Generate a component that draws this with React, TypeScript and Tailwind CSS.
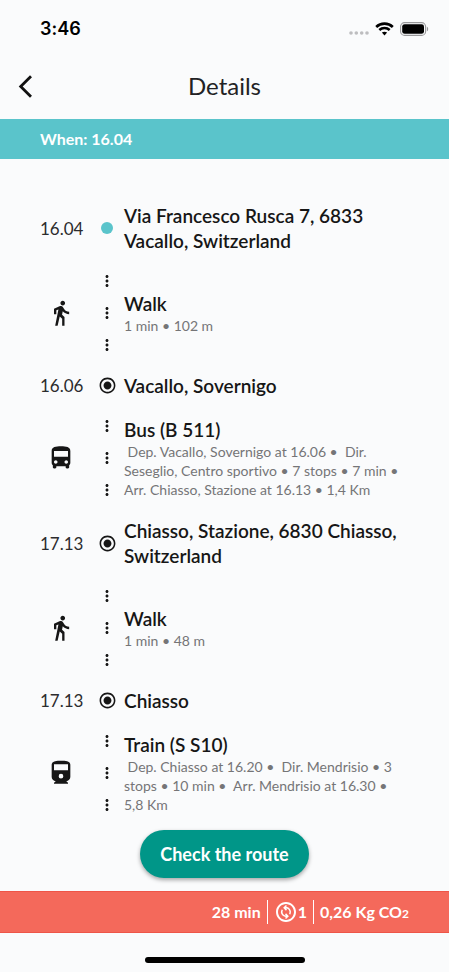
import type { ReactNode } from "react";
import {
  MdDirectionsBus,
  MdDirectionsWalk,
  MdMoreVert,
  MdOutlineChangeCircle,
  MdRadioButtonChecked,
} from "react-icons/md";

function StatusBar() {
  return (
    <div className="flex h-14 items-center justify-between pt-0.5 pr-5 pl-10">
      <span className="font-['Inter',sans-serif] text-lg font-semibold text-black">3:46</span>
      <div className="flex items-center gap-1.5">
        <svg className="mt-2" width="20" height="4" viewBox="0 0 20 4" fill="#bdbdbf" aria-hidden="true">
          <circle cx="2" cy="2" r="1.8" />
          <circle cx="7.3" cy="2" r="1.8" />
          <circle cx="12.7" cy="2" r="1.8" />
          <circle cx="18" cy="2" r="1.8" />
        </svg>
        <svg width="19" height="14" viewBox="0 0 19 14" fill="none" stroke="#000" aria-hidden="true">
          <path d="M1.2 4.9C5.8.6 13.2.6 17.8 4.9" strokeWidth="2.7" />
          <path d="M4.3 8C7.2 5.3 11.8 5.3 14.7 8" strokeWidth="2.5" />
          <path d="M6.9 10.6C8.4 9.3 10.6 9.3 12.1 10.6L9.5 13.4Z" fill="#000" stroke="none" />
        </svg>
        <svg width="29" height="14" viewBox="0 0 29 14" aria-hidden="true">
          <rect x="0.6" y="0.6" width="25" height="12.8" rx="4" fill="none" stroke="#98989a" strokeWidth="1.1" />
          <rect x="2.2" y="2.2" width="21.8" height="9.6" rx="2.4" fill="#000" />
          <path d="M26.9 4.7C28.6 5.4 28.6 8.6 26.9 9.3Z" fill="#98989a" />
        </svg>
      </div>
    </div>
  );
}

function TrainIcon() {
  return (
    <svg width="28" height="28" viewBox="0 0 24 24" fill="currentColor" fillRule="evenodd" aria-hidden="true">
      <path d="M12 1.5C8 1.5 4 1.9 4 5v10.5C4 17.4 5.6 19 7.5 19L6 20.4v.8h12v-.8L16.5 19c1.9 0 3.5-1.6 3.5-3.5V5c0-3.1-3.6-3.5-8-3.5zM6 4.4h12v5.2H6zM12 12.7a2 2 0 1 1 0 4 2 2 0 0 1 0-4z" />
    </svg>
  );
}

function Stop({ time, start, children }: { time: string; start?: boolean; children: ReactNode }) {
  return (
    <li className="flex items-center py-3">
      <time className="w-[57px] shrink-0 text-[17px] leading-[25px] text-[#2c2c2e]">{time}</time>
      <span className="flex w-5 shrink-0 justify-center">
        {start ? <span className="size-3 rounded-full bg-[#5ac4cb]" /> : <MdRadioButtonChecked size={19} />}
      </span>
      <h2 className="ml-[7px] flex-1 text-[19px] leading-[25px] font-semibold">{children}</h2>
    </li>
  );
}

function Leg({ icon, title, children }: { icon: ReactNode; title: string; children: ReactNode }) {
  return (
    <li className="flex items-center">
      <span className="flex w-[57px] shrink-0 pl-[7px]">{icon}</span>
      <span className="flex w-5 shrink-0 flex-col items-center">
        {[0, 1, 2].map((n) => (
          <span key={n} className="flex h-8 items-center">
            <MdMoreVert size={18} />
          </span>
        ))}
      </span>
      <div className="ml-[7px] flex-1">
        <h3 className="text-[19px] leading-[25px] font-semibold">{title}</h3>
        <p className="text-sm leading-[19px] text-[#757577]">{children}</p>
      </div>
    </li>
  );
}

export default function App() {
  return (
    <div className="flex min-h-screen flex-col bg-[#fafbfc] font-['Lato',sans-serif] text-[#161616] [font-variant-ligatures:none]">
      <StatusBar />
      <header className="grid h-[63px] grid-cols-[1fr_auto_1fr] items-center pb-0.5">
        <button type="button" aria-label="Back" className="w-fit p-[18px]">
          <svg width="15" height="23" viewBox="0 0 15 23" fill="none" stroke="#111" strokeWidth="2.8" aria-hidden="true">
            <path d="M13 1.2L2.7 11.5L13 21.8" />
          </svg>
        </button>
        <h1 className="pb-0.5 text-2xl font-normal text-[#222224]">Details</h1>
      </header>
      <div className="flex h-10 items-center bg-[#5ac4cb] px-10 text-base font-bold text-white">When: 16.04</div>

      <main className="flex flex-1 flex-col pt-8">
        <ol className="px-10">
          <Stop time="16.04" start>
            Via Francesco Rusca 7, 6833 Vacallo, Switzerland
          </Stop>
          <Leg icon={<MdDirectionsWalk size={28} />} title="Walk">
            1 min • 102 m
          </Leg>
          <Stop time="16.06">Vacallo, Sovernigo</Stop>
          <Leg icon={<MdDirectionsBus size={28} />} title="Bus (B 511)">
            &nbsp;Dep. Vacallo, Sovernigo at 16.06 •&nbsp; Dir. Seseglio, Centro sportivo • 7 stops • 7 min • Arr.
            Chiasso, Stazione at 16.13 • 1,4 Km
          </Leg>
          <Stop time="17.13">Chiasso, Stazione, 6830 Chiasso, Switzerland</Stop>
          <Leg icon={<MdDirectionsWalk size={28} />} title="Walk">
            1 min • 48 m
          </Leg>
          <Stop time="17.13">Chiasso</Stop>
          <Leg icon={<TrainIcon />} title="Train (S S10)">
            &nbsp;Dep. Chiasso at 16.20 •&nbsp; Dir. Mendrisio • 3 stops • 10 min •&nbsp; Arr. Mendrisio at 16.30 • 5,8
            Km
          </Leg>
        </ol>
        <button
          type="button"
          className="mx-auto mt-[9px] mb-3 h-12 rounded-full bg-[#009688] px-5 text-lg font-bold text-white shadow-[0_2px_4px_rgba(0,0,0,0.35)]"
        >
          Check the route
        </button>
      </main>

      <footer>
        <div className="flex h-[42px] items-center justify-end border-y border-[#ee5548] bg-[#f4695b] px-10 text-base font-bold text-white">
          <span>28 min</span>
          <span className="mx-1.5 h-6 w-px bg-white" />
          <span className="flex items-center">
            <MdOutlineChangeCircle size={24} />1
          </span>
          <span className="mx-1.5 h-6 w-px bg-white" />
          <span>
            0,26 Kg CO<span className="text-xs">2</span>
          </span>
        </div>
        <div className="flex h-[39px] items-end justify-center pb-[9px]">
          <span className="h-1.5 w-40 rounded-full bg-black" />
        </div>
      </footer>
    </div>
  );
}
